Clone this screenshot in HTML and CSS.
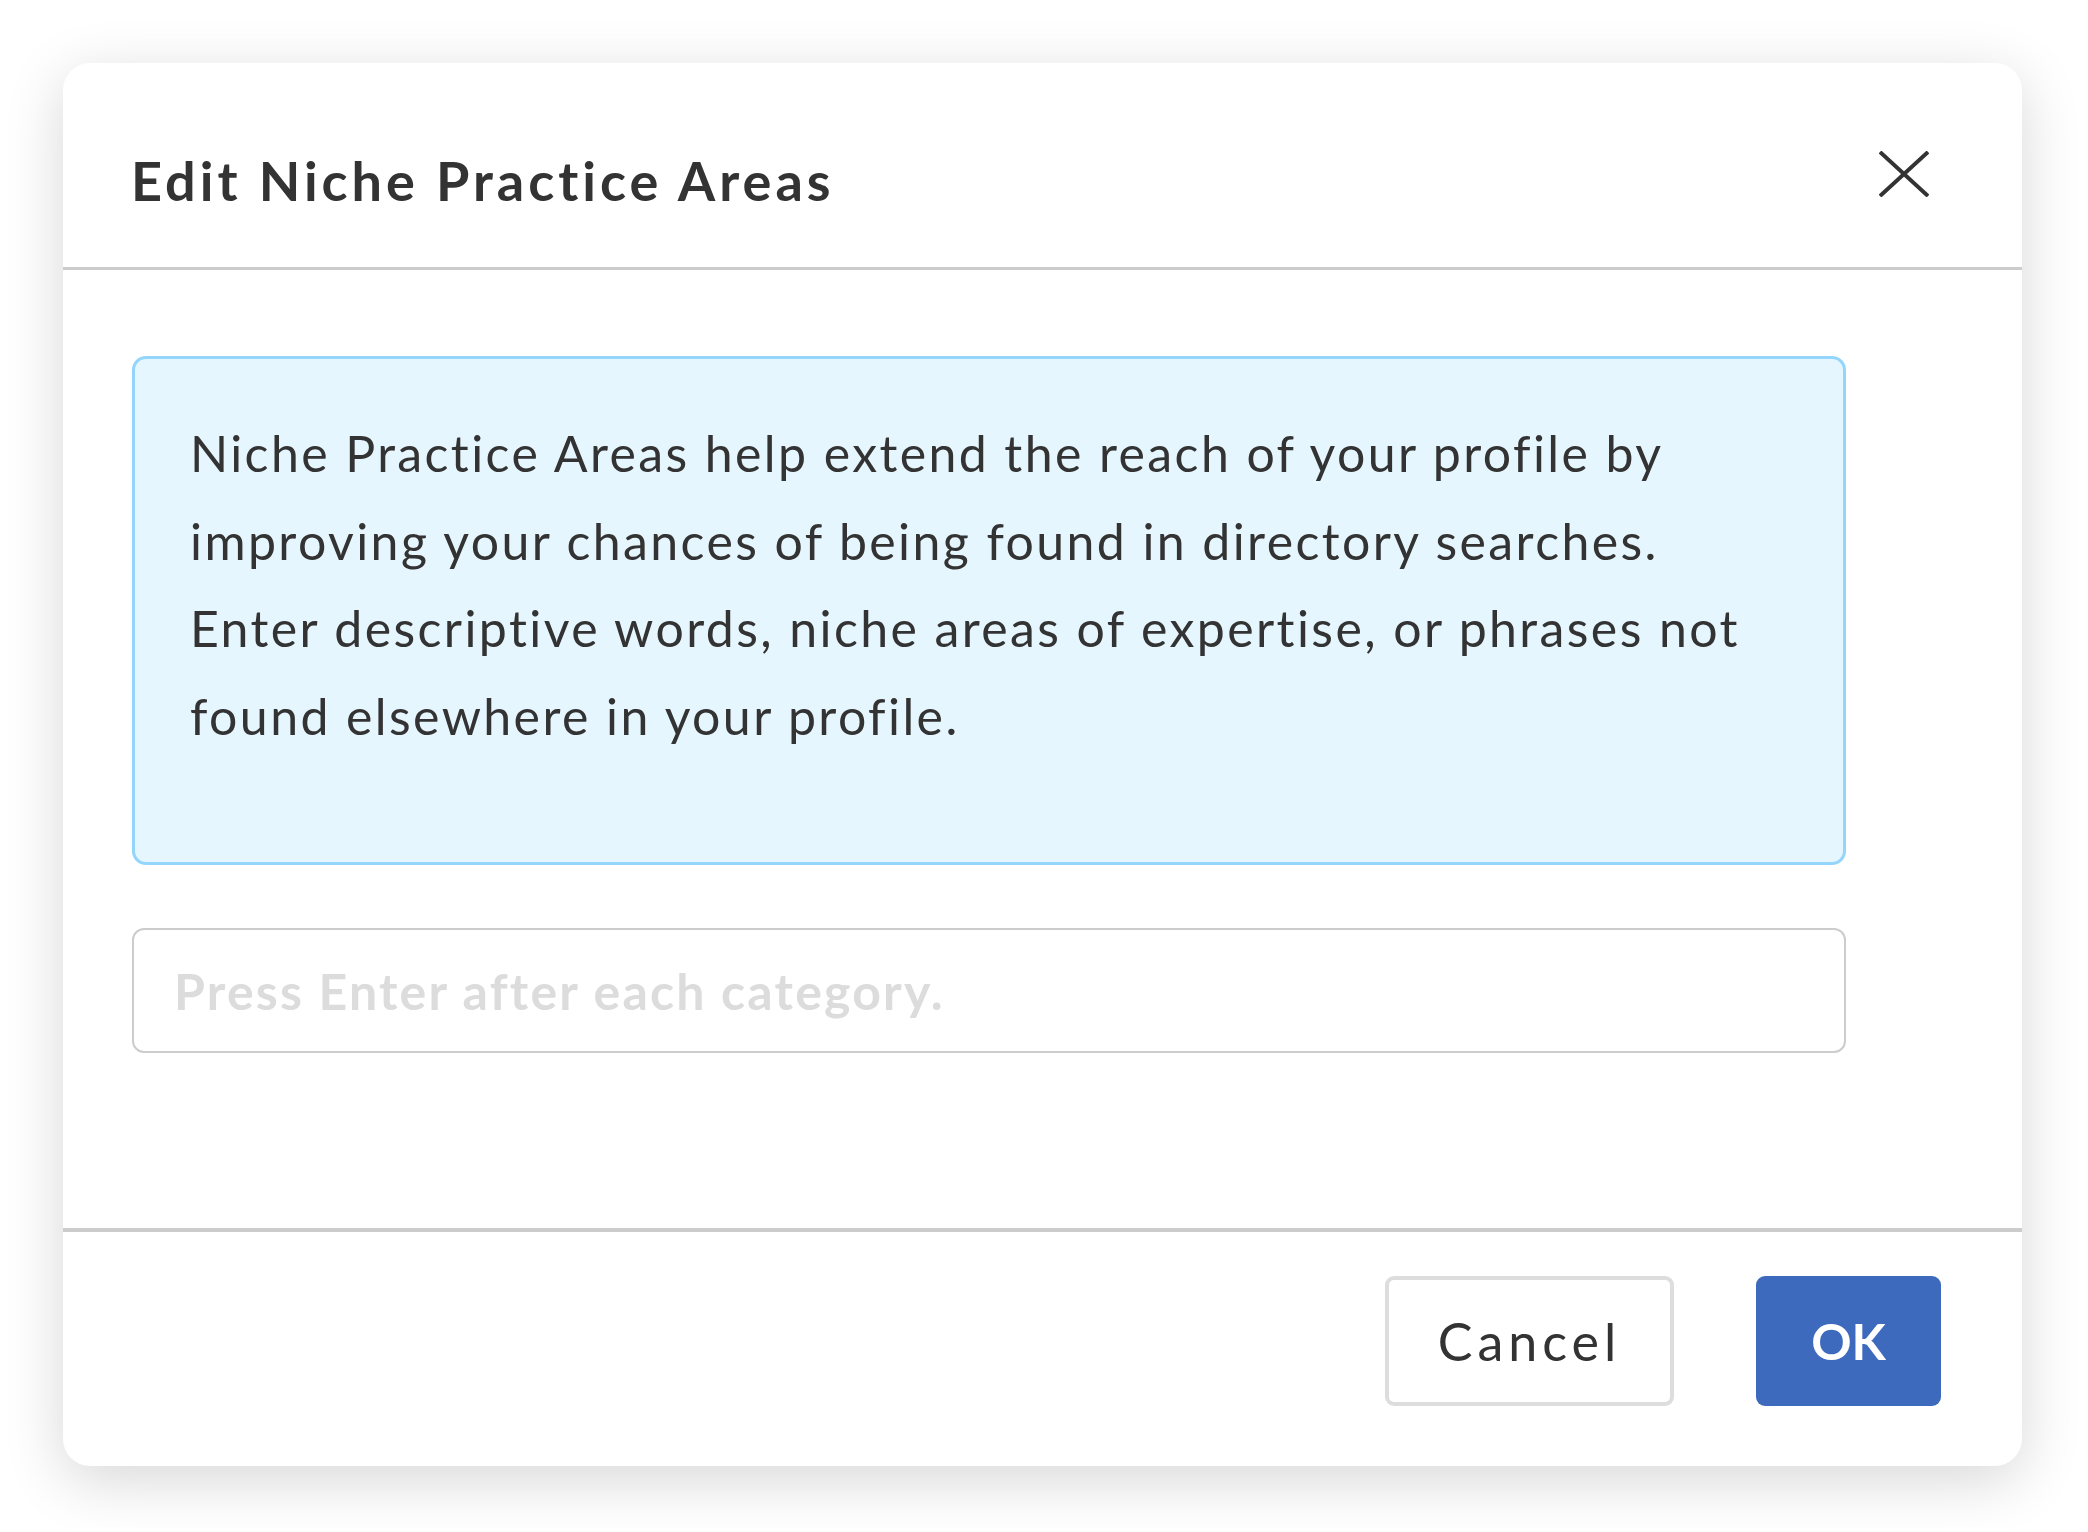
FILE: index.html
```html
<!DOCTYPE html>
<html lang="en">
<head>
    <meta charset="UTF-8">
    <meta name="viewport" content="width=device-width, initial-scale=1.0">
    <title>Edit Niche Practice Areas</title>
    <link rel="stylesheet" href="styles.css">
</head>
<body>
    <div class="modal">
        <div class="modal-header">
            <h2 class="modal-title">Edit Niche Practice Areas</h2>
            <button class="close-button" title="Close">
                <svg width="50" height="46" viewBox="0 0 50 46">
                    <path d="M1 1 L49 45 M49 1 L1 45" stroke="#333" stroke-width="4" fill="none"/>
                </svg>
            </button>
        </div>
        <div class="modal-body">
            <div class="info-box">
                Niche Practice Areas help extend the reach of your profile by<br>
                improving your chances of being found in directory searches.<br>
                Enter descriptive words, niche areas of expertise, or phrases not<br>
                found elsewhere in your profile.
            </div>
            <input class="category-input" type="text" placeholder="Press Enter after each category.">
        </div>
        <div class="modal-footer">
            <button class="btn btn-cancel">Cancel</button>
            <button class="btn btn-ok">OK</button>
        </div>
    </div>
</body>
</html>
```

FILE: styles.css
```css
body {
    margin: 0;
    padding: 63px;
    background: #fff;
    font-family: Lato, "DejaVu Sans", sans-serif;
    color: #333;
}

.modal {
    inline-size: 1959px;
    block-size: 1403px;
    box-sizing: border-box;
    background: #fff;
    border-radius: 27px;
    box-shadow: 0 14px 60px rgba(0, 0, 0, 0.16);
    display: flex;
    flex-direction: column;
}

.modal-header {
    block-size: 204px;
    border-bottom: 3px solid #cccccc;
    display: flex;
    align-items: center;
    justify-content: space-between;
    padding: 0 93px 0 68px;
}

.modal-title {
    margin: 32px 0 0;
    font-size: 54px;
    font-weight: 700;
    letter-spacing: 4px;
    line-height: 1;
}

.close-button {
    background: none;
    border: none;
    padding: 0;
    margin-top: 18px;
    cursor: pointer;
    display: flex;
}

.modal-body {
    flex: 1;
    padding: 86px 176px 0 69px;
}

.info-box {
    block-size: 509px;
    box-sizing: border-box;
    background: #e5f6fe;
    border: 3px solid #94d5fc;
    border-radius: 14px;
    padding: 51px 20px 0 55px;
    font-size: 50px;
    line-height: 87.5px;
    letter-spacing: 2.4px;
    white-space: nowrap;
}

.category-input {
    display: block;
    inline-size: 100%;
    block-size: 125px;
    box-sizing: border-box;
    margin-top: 63px;
    border: 2px solid #cccccc;
    border-radius: 12px;
    padding: 0 40px;
    font-family: inherit;
    font-size: 50px;
    font-weight: 700;
    letter-spacing: 2.2px;
    color: #333;
    outline: none;
}

.category-input::placeholder {
    color: #dcdcdc;
}

.modal-footer {
    border-top: 4px solid #cccccc;
    display: flex;
    justify-content: flex-end;
    gap: 82px;
    padding: 44px 81px 60px 0;
}

.btn {
    block-size: 130px;
    box-sizing: border-box;
    border-radius: 9px;
    font-family: inherit;
    cursor: pointer;
}

.btn-cancel {
    inline-size: 289px;
    background: #fff;
    border: 4px solid #dddddd;
    color: #333;
    font-size: 52px;
    letter-spacing: 5px;
}

.btn-ok {
    inline-size: 185px;
    background: #3d6abd;
    border: none;
    color: #fff;
    font-size: 50px;
    font-weight: 700;
}
```
